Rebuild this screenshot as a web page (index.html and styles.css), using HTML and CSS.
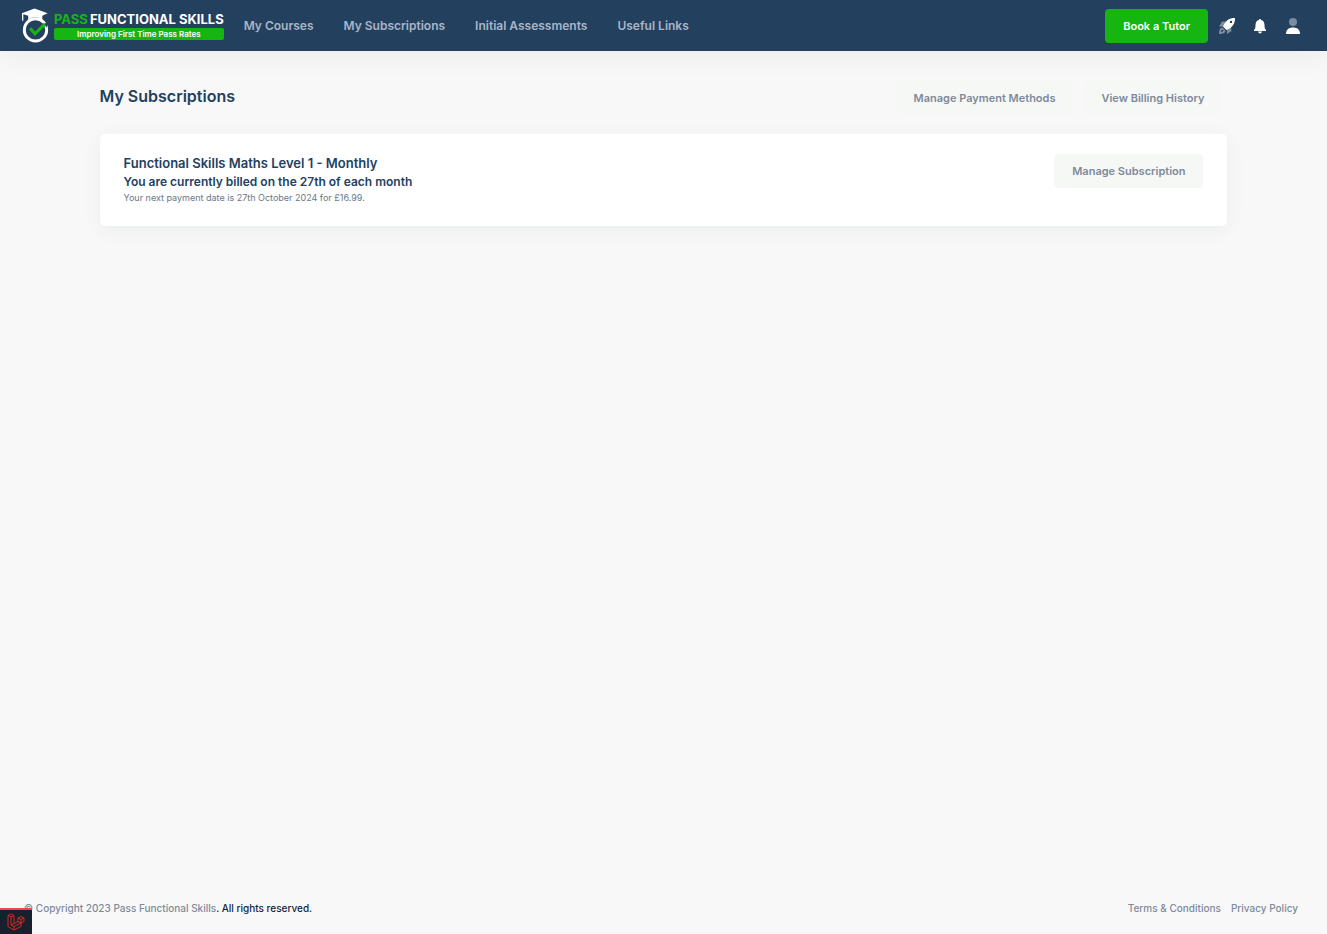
FILE: index.html
```html
<!DOCTYPE html>
<html lang="en">
<head>
    <meta charset="UTF-8">
    <meta name="viewport" content="width=device-width, initial-scale=1.0">
    <title>My Subscriptions</title>
    <link rel="stylesheet" href="styles.css">
</head>
<body>
    <header class="header">
        <a class="logo" href="#">
            <svg class="logo-mark" viewBox="0 0 28 36" aria-hidden="true">
                <circle cx="14.500" cy="22.500" r="11.500" fill="none" stroke="#fff" stroke-width="3"/>
                <path d="M22.500 16L27 15.500L26 20" fill="#23415f"/>
                <path d="M0.500 5.500L13.500 .5L27 5.500L21.500 8V12Q14 7 7 12V8L2 6.500V13H.8Z" fill="#fff"/>
                <path d="M9 21L14 26.500L24 16.500" fill="none" stroke="#17b512" stroke-width="3.200"/>
            </svg>
            <span class="logo-text">
                <span class="logo-name"><span class="logo-pass">PASS</span> <span>FUNCTIONAL SKILLS</span></span>
                <span class="logo-tagline">Improving First Time Pass Rates</span>
            </span>
        </a>
        <nav class="nav">
            <a href="#">My Courses</a>
            <a href="#">My Subscriptions</a>
            <a href="#">Initial Assessments</a>
            <a href="#">Useful Links</a>
        </nav>
        <div class="header-actions">
            <button class="btn btn-primary">Book a Tutor</button>
            <button class="icon-btn" aria-label="Updates">
                <svg viewBox="0 0 18 18">
                    <g fill="#fff" opacity=".4">
                        <path d="M8 4.500L4 4.500L1 9.500H6ZM13 10L13.500 14L9 17V12Z"/>
                        <path fill-rule="evenodd" d="M4.500 10.500C2 10.500 1 13 1 17C5 17 7.500 16 7.500 13.500ZM4.400 12.500L5.500 13.600Q5 15 3 15Q3 13 4.400 12.500Z"/>
                    </g>
                    <path fill="#fff" fill-rule="evenodd" d="M17 1C11 1 7.500 3.500 5 9.500L8.500 13C14.500 10.500 17 7 17 1ZM13 3.700A1.200 1.200 0 1 1 13 6.100A1.200 1.200 0 0 1 13 3.700Z"/>
                </svg>
            </button>
            <button class="icon-btn" aria-label="Notifications">
                <svg viewBox="0 0 18 18" fill="#fff">
                    <path d="M9 2C9.700 2 10 2.500 10 3.100C12.400 3.500 13.500 5.500 13.500 8C13.500 11 14 12 15 13V14H3V13C4 12 4.500 11 4.500 8C4.500 5.500 5.600 3.500 8 3.100C8 2.500 8.300 2 9 2ZM7 14.500H11Q10.500 16.500 9 16.500Q7.500 16.500 7 14.500Z"/>
                </svg>
            </button>
            <button class="icon-btn" aria-label="Account">
                <svg viewBox="0 0 18 18" fill="#fff">
                    <circle cx="9" cy="5" r="4" opacity=".4"/>
                    <path d="M2 17C2 12.500 5 10.500 9 10.500S16 12.500 16 17Z"/>
                </svg>
            </button>
        </div>
    </header>

    <main class="container">
        <div class="page-head">
            <h1>My Subscriptions</h1>
            <div class="button-group">
                <button class="btn btn-light">Manage Payment Methods</button>
                <button class="btn btn-light">View Billing History</button>
            </div>
        </div>
        <section class="card">
            <div class="subscription">
                <h2>Functional Skills Maths Level 1 - Monthly</h2>
                <h3>You are currently billed on the 27th of each month</h3>
                <p>Your next payment date is 27th October 2024 for £16.99.</p>
            </div>
            <button class="btn btn-light">Manage Subscription</button>
        </section>
    </main>

    <footer class="footer">
        <p><span class="muted">© Copyright 2023</span> <a href="#">Pass Functional Skills</a>. All rights reserved.</p>
        <nav class="footer-links">
            <a href="#">Terms &amp; Conditions</a>
            <a href="#">Privacy Policy</a>
        </nav>
    </footer>

    <button class="debugbar" aria-label="Open debug bar">
        <svg viewBox="0 0 18 18" fill="none" stroke="#d42a22" stroke-width="1">
            <path d="M1 2.500L4 1L7 2.500V10.500L11 8.500V5L14 3.500L17 5V8.500L14 10V13.500L7 17L1 13.500ZM1 2.500L4 4L7 2.500M4 4V12L7 13.500L14 10M7 10.500L4 12M7 13.500V17M11 5L14 6.500L17 5M14 6.500V10L11 8.500"/>
        </svg>
    </button>
</body>
</html>
```
FILE: styles.css
```css
:root {
    --bg-color: #f8f8f8;
    --primary-color: #23415f;
    --success-color: #17b512;
    --muted-color: #7e8a9c;
}
* {
    margin: 0;
    padding: 0;
    box-sizing: border-box;
}
body {
    font-family: 'Inter', sans-serif;
    font-size: 12px;
    background-color: var(--bg-color);
    color: #12263f;
    display: flex;
    flex-direction: column;
    min-height: 100vh;
}
a {
    color: inherit;
    text-decoration: none;
}
button {
    border: none;
    font-family: inherit;
    cursor: pointer;
}
.header {
    display: flex;
    align-items: center;
    padding: 8px 25px 8px 21px;
    background-color: var(--primary-color);
    box-shadow: 0 4px 28px rgba(0,0,0,0.06);
}
.logo {
    display: flex;
    align-items: center;
    gap: 5px;
}
.logo-mark {
    width: 28px;
    height: 35px;
}
.logo-text {
    display: flex;
    flex-direction: column;
    gap: 1px;
}
.logo-name {
    display: flex;
    gap: 2px;
    font-size: 13px;
    line-height: 16px;
    font-weight: 700;
    white-space: nowrap;
    color: #fff;
}
.logo-name .logo-pass {
    color: var(--success-color);
}
.logo-tagline {
    background-color: var(--success-color);
    border-radius: 2px;
    color: #fff;
    font-size: 8px;
    font-weight: 600;
    line-height: 12px;
    text-align: center;
}
.nav {
    display: flex;
    gap: 30px;
    margin-left: 20px;
    color: #a9b5c7;
    font-weight: 600;
    line-height: 18px;
}
.header-actions {
    display: flex;
    align-items: center;
    gap: 15px;
    margin-left: auto;
}
.header-actions .btn {
    margin-right: -5px;
}
.icon-btn {
    display: flex;
    background: none;
}
.icon-btn svg {
    width: 18px;
    height: 18px;
}
.btn {
    padding: 8px 18px;
    border-radius: 4px;
    font-size: 11px;
    font-weight: 600;
    line-height: 18px;
}
.btn-primary {
    background-color: var(--success-color);
    color: #fff;
}
.btn-light {
    background-color: #f6f8f6;
    color: var(--muted-color);
}
.container {
    width: 85%;
    margin: 0 auto;
    padding-top: 30px;
    flex: 1;
}
.page-head {
    display: flex;
    justify-content: space-between;
    align-items: flex-start;
    margin-bottom: 19px;
}
.page-head h1 {
    color: var(--primary-color);
    font-size: 16px;
    font-weight: 600;
    line-height: 30px;
}
.button-group {
    display: flex;
    gap: 10px;
    padding-right: 5px;
}
.card {
    display: flex;
    justify-content: space-between;
    align-items: flex-start;
    padding: 20px 24px 22px;
    background-color: #fff;
    border-radius: 5px;
    box-shadow: 0 4px 20px rgba(20,60,50,0.06);
}
.subscription {
    color: var(--primary-color);
}
.subscription h2 {
    font-size: 13px;
    font-weight: 600;
    line-height: 18px;
}
.subscription h3 {
    font-size: 12px;
    font-weight: 600;
    line-height: 20px;
}
.subscription p {
    color: #6b7789;
    font-size: 9px;
    line-height: 12px;
}
.footer {
    display: flex;
    justify-content: space-between;
    padding: 17px 29px 17px 24px;
    font-size: 10px;
    font-weight: 500;
    line-height: 17px;
}
.footer .muted,
.footer a {
    color: var(--muted-color);
}
.footer-links {
    display: flex;
    gap: 10px;
}
.debugbar {
    position: fixed;
    left: 0;
    bottom: 0;
    padding: 3px 6px;
    background-color: #18202d;
    border-top: 2px solid #f4434d;
}
.debugbar svg {
    display: block;
    width: 20px;
    height: 18px;
}
```
